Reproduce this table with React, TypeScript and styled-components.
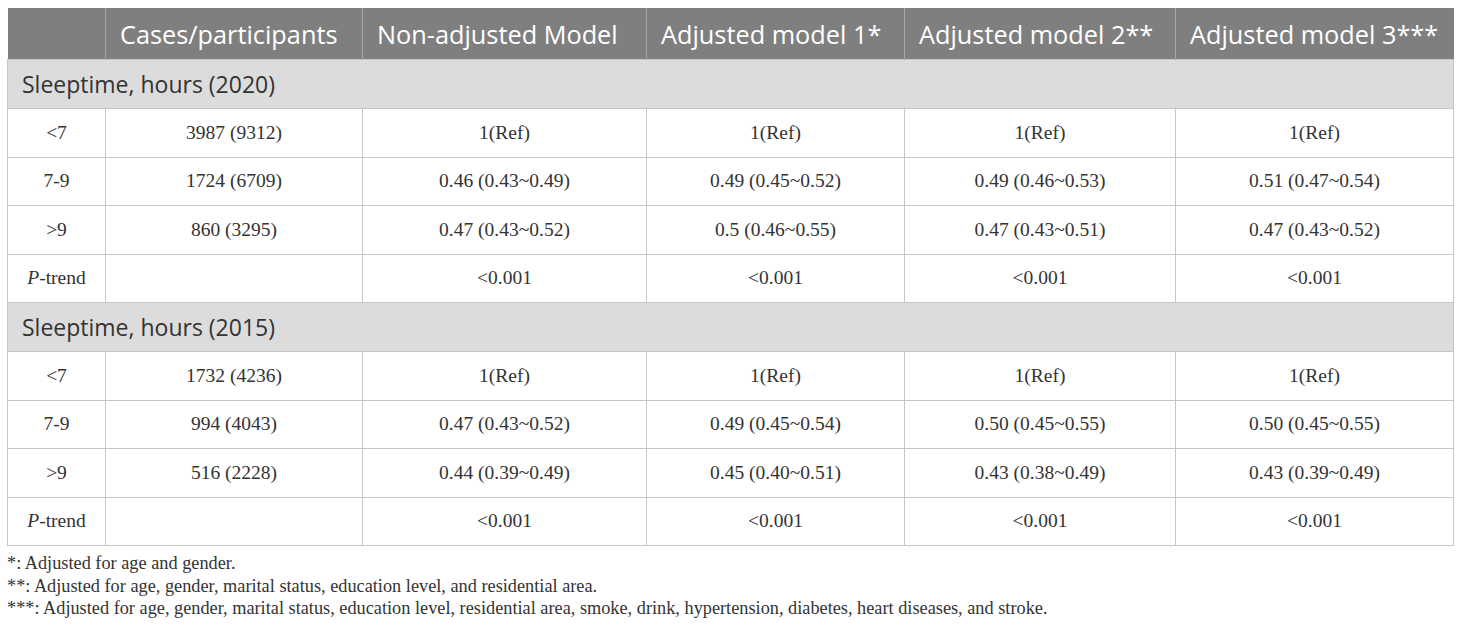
import styled, { createGlobalStyle } from "styled-components";

const GlobalStyle = createGlobalStyle`
  body {
    margin: 0;
    background: #ffffff;
  }
`;

const Page = styled.div`
  padding: 8px 8px 0 7px;
  width: 1460px;
  box-sizing: border-box;
`;

const Table = styled.table`
  width: 1446px;
  border-collapse: collapse;
  table-layout: fixed;
  color: #333333;
`;

const HeadCell = styled.th`
  background: #7f7f7f;
  color: #ffffff;
  font-family: "Open Sans", sans-serif;
  font-weight: 400;
  font-size: 25.3px;
  text-align: left;
  padding: 0 14px;
  height: 51px;
  border-left: 1px solid #a6a6a6;
  white-space: nowrap;
  overflow: hidden;
  &:first-child {
    border-left: none;
  }
`;

const SectionCell = styled.td`
  background: #dcdcdc;
  font-family: "Open Sans", sans-serif;
  font-size: 23px;
  color: #333333;
  padding: 0 14px;
  height: 48px;
  border: 1px solid #c6c6c6;
`;

const Cell = styled.td`
  font-family: "Liberation Serif", serif;
  font-size: 19.5px;
  text-align: center;
  height: 47.5px;
  padding: 0;
  border: 1px solid #c6c6c6;
  white-space: nowrap;
`;

const Notes = styled.div`
  margin-top: 6px;
  font-family: "Liberation Serif", serif;
  font-size: 18.3px;
  color: #333333;
  line-height: 22.5px;
`;

const columns = [
  { label: "", width: 98 },
  { label: "Cases/participants", width: 257 },
  { label: "Non-adjusted Model", width: 284 },
  { label: "Adjusted model 1*", width: 258 },
  { label: "Adjusted model 2**", width: 271 },
  { label: "Adjusted model 3***", width: 278 },
];

interface Section {
  title: string;
  rows: string[][];
}

const sections: Section[] = [
  {
    title: "Sleeptime, hours (2020)",
    rows: [
      ["<7", "3987 (9312)", "1(Ref)", "1(Ref)", "1(Ref)", "1(Ref)"],
      ["7-9", "1724 (6709)", "0.46 (0.43~0.49)", "0.49 (0.45~0.52)", "0.49 (0.46~0.53)", "0.51 (0.47~0.54)"],
      [">9", "860 (3295)", "0.47 (0.43~0.52)", "0.5 (0.46~0.55)", "0.47 (0.43~0.51)", "0.47 (0.43~0.52)"],
      ["P-trend", "", "<0.001", "<0.001", "<0.001", "<0.001"],
    ],
  },
  {
    title: "Sleeptime, hours (2015)",
    rows: [
      ["<7", "1732 (4236)", "1(Ref)", "1(Ref)", "1(Ref)", "1(Ref)"],
      ["7-9", "994 (4043)", "0.47 (0.43~0.52)", "0.49 (0.45~0.54)", "0.50 (0.45~0.55)", "0.50 (0.45~0.55)"],
      [">9", "516 (2228)", "0.44 (0.39~0.49)", "0.45 (0.40~0.51)", "0.43 (0.38~0.49)", "0.43 (0.39~0.49)"],
      ["P-trend", "", "<0.001", "<0.001", "<0.001", "<0.001"],
    ],
  },
];

function renderLabel(text: string) {
  if (text === "P-trend") {
    return (
      <>
        <i>P</i>-trend
      </>
    );
  }
  return text;
}

export default function App() {
  return (
    <Page>
      <GlobalStyle />
      <Table>
        <colgroup>
          {columns.map((c, i) => (
            <col key={i} style={{ width: c.width }} />
          ))}
        </colgroup>
        <thead>
          <tr>
            {columns.map((c, i) => (
              <HeadCell key={i}>{c.label}</HeadCell>
            ))}
          </tr>
        </thead>
        <tbody>
          {sections.map((s) => [
            <tr key={s.title}>
              <SectionCell colSpan={6}>{s.title}</SectionCell>
            </tr>,
            ...s.rows.map((r, ri) => (
              <tr key={s.title + ri}>
                {r.map((v, ci) => (
                  <Cell key={ci}>{ci === 0 ? renderLabel(v) : v}</Cell>
                ))}
              </tr>
            )),
          ])}
        </tbody>
      </Table>
      <Notes>
        <div>*: Adjusted for age and gender.</div>
        <div>**: Adjusted for age, gender, marital status, education level, and residential area.</div>
        <div>
          ***: Adjusted for age, gender, marital status, education level, residential area, smoke, drink,
          hypertension, diabetes, heart diseases, and stroke.
        </div>
      </Notes>
    </Page>
  );
}
